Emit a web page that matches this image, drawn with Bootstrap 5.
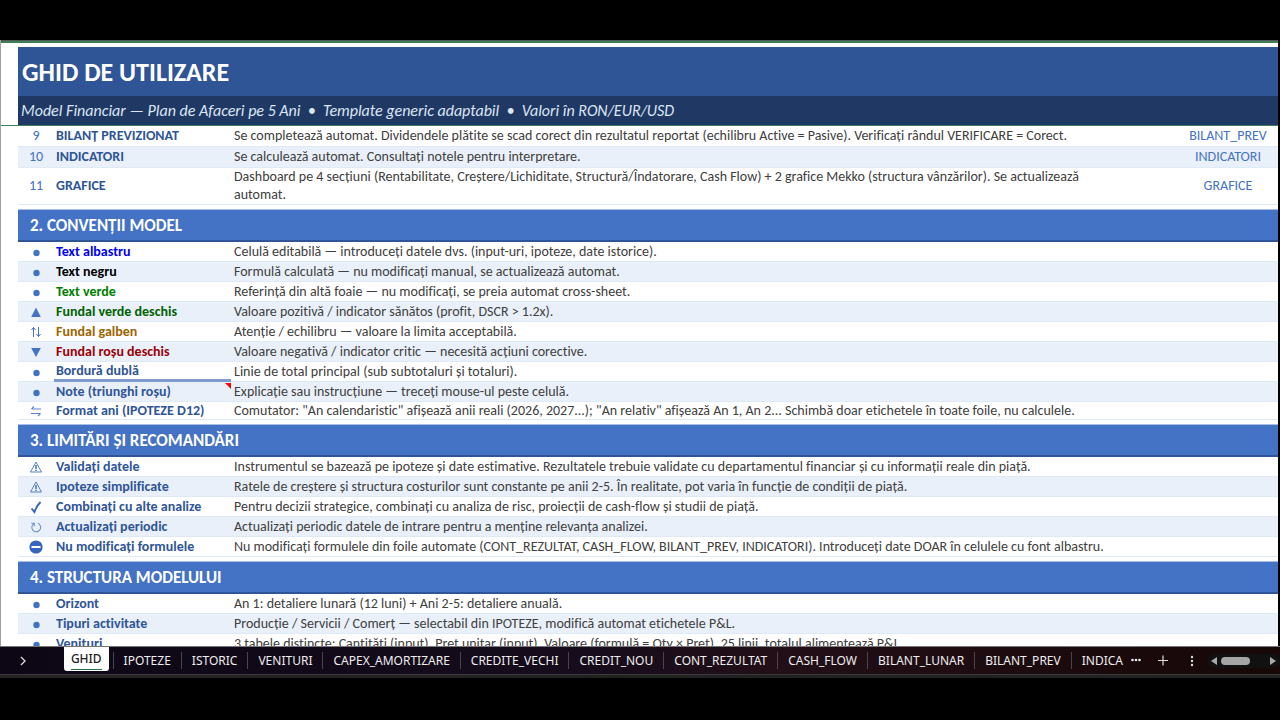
<!DOCTYPE html>
<html lang="ro">
<head>
<meta charset="utf-8">
<meta name="viewport" content="width=device-width, initial-scale=1">
<title>Ghid de utilizare</title>
<link href="https://cdn.jsdelivr.net/npm/bootstrap@5.3.0/dist/css/bootstrap.min.css" rel="stylesheet">
<style>
  body { background: #000; font-family: Carlito, Lato, "Open Sans", sans-serif; font-size: 14px; color: #404040; font-variant-ligatures: none; }
  .screen { height: 100vh; padding: 40px 0 42px; }
  .sheet { background: #fff; border-left: 1px solid #a0a0a0; margin-right: 2px; min-height: 0; }
  .col-edge { height: 3px; background: #555; border-bottom: 2px solid #3c8058; }
  .frozen { padding: 4px 0 0 17px; border-bottom: 1px solid #3f7d5c; }
  .doc-title { background: #2f5597; color: #fff; height: 49px; padding: 2px 0 0 4px; font-size: 26px; font-weight: 700; }
  .doc-sub { background: #203864; color: #dce6f5; height: 29px; padding-left: 3px; font-size: 16px; font-style: italic; }
  .grid-wrap { padding-left: 17px; }
  .guide { width: 100%; table-layout: fixed; border-collapse: separate; border-spacing: 0; line-height: 19px; }
  .guide td, .guide th { padding: 0; vertical-align: middle; }
  .guide tr.item > * { border-bottom: 1px solid #deeaf6; }
  .guide tr.alt > * { background: #eaf0f9; }
  .guide tr.head1 > * { line-height: 20px; }
  .guide tr.two-line > * { line-height: 18px; }
  .guide tr.short > * { line-height: 17px; }
  .guide tr.item > td:first-child { color: #4472c4; text-align: center; }
  .guide tr.item > th { padding-left: 2px; color: #2f5597; font-weight: 700; white-space: nowrap; position: relative; }
  .guide tr.item > td:nth-child(3) { padding: 0 60px 0 3px; }
  .guide tr.item > td:nth-child(4) { text-align: center; }
  .guide a { color: #4472c4; text-decoration: none; }
  .guide tr.section > th { background: #4472c4; color: #fff; font-size: 17px; font-weight: 700; height: 33px; padding-left: 12px; border-top: 1px solid #a9bfe6; border-bottom: 2px solid #2f5597; }
  .guide tr.gap-row > td { height: 4px; line-height: 0; }
  .guide svg { display: block; margin: 0 auto; }
  .guide tr.item > th.double-line { border-bottom: 3px solid #7f9bcb; line-height: 17px; }
  .note-mark { position: absolute; top: 1px; right: 0; border: 3px solid; border-color: #f00 #f00 transparent transparent; }
  .tabs { height: 28px; background: linear-gradient(90deg, #0c0615, #160c1c 45%, #220f18 60%, #170706); border-top: 1px solid #777; color: #eee; font-family: "Noto Sans", "Open Sans", sans-serif; font-size: 12px; }
  .tabs button { background: none; border: 0; color: inherit; padding: 0; line-height: 18px; white-space: nowrap; }
  .tab-list { margin: 0; padding: 0; list-style: none; }
  .tab-list li + li { border-left: 1px solid #4b4450; height: 17px; display: flex; align-items: center; }
  .tab-list li + li button { padding: 0 10px; }
  .tab-list li:last-child button { padding-right: 0; }
  .tabs button.current { background: #fff; color: #222; border-radius: 0 0 3px 3px; height: 24px; padding: 0 7px; margin-right: 4px; font-weight: 500; }
  .current span { display: block; border-bottom: 1px solid #217346; height: 21px; padding-top: 1px; }
  .scroller { width: 73px; height: 14px; border-radius: 7px; background: #111; padding: 0 4px; }
  .thumb { width: 29px; height: 8px; border-radius: 4px; background: #a5a5a5; }
  .win-edge { height: 4px; background: #222; border-top: 1px solid #3a3a3a; }
</style>
</head>
<body>
<svg width="0" height="0" class="position-absolute" aria-hidden="true">
  <symbol id="dot" viewBox="0 0 14 14"><circle cx="7.500" cy="8" r="3.200" fill="#4472c4"/></symbol>
  <symbol id="up" viewBox="0 0 14 14"><path d="M7 2.500 11.800 12H2.200z" fill="#4472c4"/></symbol>
  <symbol id="down" viewBox="0 0 14 14"><path d="M7 12 11.800 3H2.200z" fill="#4472c4"/></symbol>
  <symbol id="updown" viewBox="0 0 14 14"><path d="M4.500 12V2.500M2.500 5l2-2.500 2 2.500M9.500 2v9.500M7.500 9l2 2.500 2-2.500" fill="none" stroke="#4472c4"/></symbol>
  <symbol id="swap" viewBox="0 0 14 14"><path d="M12 5H2.500M5 2.500 2.500 5M2 9.500h9.500M11.500 9.500 9 12" fill="none" stroke="#5a82cc" stroke-width="1.100"/></symbol>
  <symbol id="warn" viewBox="0 0 14 14"><path d="M7 2 12.500 12h-11z" fill="none" stroke="#4472c4" stroke-width=".9"/><path d="M7 5v4M7 9.800v1.200" stroke="#4472c4" stroke-width="1.500"/></symbol>
  <symbol id="check" viewBox="0 0 14 14"><path d="M2.500 8.500 5.500 12Q7.500 6 11.500 2" fill="none" stroke="#3565bd" stroke-width="1.900"/></symbol>
  <symbol id="cycle" viewBox="0 0 14 14"><path d="M2.300 3.300h3v3M5 3.600a4.400 4.400 0 1 0 5.800 1.200Q10.300 3.600 9 3.300" fill="none" stroke="#6c90d2" stroke-width="1.100"/></symbol>
  <symbol id="stop" viewBox="0 0 14 14"><circle cx="7" cy="7" r="6.600" fill="#3565bd"/><path d="M2.500 7h9" stroke="#fff" stroke-width="2"/></symbol>
</svg>
<div class="screen d-flex flex-column">
  <main class="sheet flex-grow-1 overflow-hidden">
    <div class="col-edge"></div>
    <header class="frozen">
      <h1 class="doc-title d-flex align-items-center m-0">GHID DE UTILIZARE</h1>
      <p class="doc-sub d-flex align-items-center m-0">Model Financiar — Plan de Afaceri pe 5 Ani&nbsp; •&nbsp; Template generic adaptabil&nbsp; •&nbsp; Valori în RON/EUR/USD</p>
    </header>
    <div class="grid-wrap">
      <table class="guide">
        <colgroup><col style="width:36px"><col style="width:177px"><col><col style="width:100px"></colgroup>
        <tbody>
          <tr class="item head1"><td>9</td><th scope="row">BILANȚ PREVIZIONAT</th><td>Se completează automat. Dividendele plătite se scad corect din rezultatul reportat (echilibru Active = Pasive). Verificați rândul VERIFICARE = Corect.</td><td><a href="#">BILANT_PREV</a></td></tr>
          <tr class="item head1 alt"><td>10</td><th scope="row">INDICATORI</th><td>Se calculează automat. Consultați notele pentru interpretare.</td><td><a href="#">INDICATORI</a></td></tr>
          <tr class="item two-line"><td>11</td><th scope="row">GRAFICE</th><td>Dashboard pe 4 secțiuni (Rentabilitate, Creștere/Lichiditate, Structură/Îndatorare, Cash Flow) + 2 grafice Mekko (structura vânzărilor). Se actualizează automat.</td><td><a href="#">GRAFICE</a></td></tr>
          <tr class="gap-row"><td colspan="4"></td></tr>
        </tbody>
        <tbody>
          <tr class="section"><th colspan="4" scope="rowgroup">2. CONVENȚII MODEL</th></tr>
          <tr class="item"><td><svg width="14" height="14"><use href="#dot"/></svg></td><th scope="row" style="color:#0000ff">Text albastru</th><td>Celulă editabilă — introduceți datele dvs. (input-uri, ipoteze, date istorice).</td><td></td></tr>
          <tr class="item alt"><td><svg width="14" height="14"><use href="#dot"/></svg></td><th scope="row" style="color:#000">Text negru</th><td>Formulă calculată — nu modificați manual, se actualizează automat.</td><td></td></tr>
          <tr class="item"><td><svg width="14" height="14"><use href="#dot"/></svg></td><th scope="row" style="color:#008000">Text verde</th><td>Referință din altă foaie — nu modificați, se preia automat cross-sheet.</td><td></td></tr>
          <tr class="item alt"><td><svg width="14" height="14"><use href="#up"/></svg></td><th scope="row" style="color:#006100">Fundal verde deschis</th><td>Valoare pozitivă / indicator sănătos (profit, DSCR &gt; 1.2x).</td><td></td></tr>
          <tr class="item"><td><svg width="14" height="14"><use href="#updown"/></svg></td><th scope="row" style="color:#9c6500">Fundal galben</th><td>Atenție / echilibru — valoare la limita acceptabilă.</td><td></td></tr>
          <tr class="item alt"><td><svg width="14" height="14"><use href="#down"/></svg></td><th scope="row" style="color:#9c0006">Fundal roșu deschis</th><td>Valoare negativă / indicator critic — necesită acțiuni corective.</td><td></td></tr>
          <tr class="item"><td><svg width="14" height="14"><use href="#dot"/></svg></td><th scope="row" class="double-line">Bordură dublă</th><td>Linie de total principal (sub subtotaluri și totaluri).</td><td></td></tr>
          <tr class="item alt"><td><svg width="14" height="14"><use href="#dot"/></svg></td><th scope="row">Note (triunghi roșu)<span class="note-mark"></span></th><td>Explicație sau instrucțiune — treceți mouse-ul peste celulă.</td><td></td></tr>
          <tr class="item short"><td><svg width="14" height="14"><use href="#swap"/></svg></td><th scope="row">Format ani (IPOTEZE D12)</th><td>Comutator: "An calendaristic" afișează anii reali (2026, 2027...); "An relativ" afișează An 1, An 2... Schimbă doar etichetele în toate foile, nu calculele.</td><td></td></tr>
          <tr class="gap-row"><td colspan="4"></td></tr>
        </tbody>
        <tbody>
          <tr class="section"><th colspan="4" scope="rowgroup">3. LIMITĂRI ȘI RECOMANDĂRI</th></tr>
          <tr class="item"><td><svg width="14" height="14"><use href="#warn"/></svg></td><th scope="row">Validați datele</th><td>Instrumentul se bazează pe ipoteze și date estimative. Rezultatele trebuie validate cu departamentul financiar și cu informații reale din piață.</td><td></td></tr>
          <tr class="item alt"><td><svg width="14" height="14"><use href="#warn"/></svg></td><th scope="row">Ipoteze simplificate</th><td>Ratele de creștere și structura costurilor sunt constante pe anii 2-5. În realitate, pot varia în funcție de condiții de piață.</td><td></td></tr>
          <tr class="item"><td><svg width="14" height="14"><use href="#check"/></svg></td><th scope="row">Combinați cu alte analize</th><td>Pentru decizii strategice, combinați cu analiza de risc, proiecții de cash-flow și studii de piață.</td><td></td></tr>
          <tr class="item alt"><td><svg width="14" height="14"><use href="#cycle"/></svg></td><th scope="row">Actualizați periodic</th><td>Actualizați periodic datele de intrare pentru a menține relevanța analizei.</td><td></td></tr>
          <tr class="item"><td><svg width="14" height="14"><use href="#stop"/></svg></td><th scope="row">Nu modificați formulele</th><td class="text-nowrap">Nu modificați formulele din foile automate (CONT_REZULTAT, CASH_FLOW, BILANT_PREV, INDICATORI). Introduceți date DOAR în celulele cu font albastru.</td><td></td></tr>
          <tr class="gap-row"><td colspan="4"></td></tr>
        </tbody>
        <tbody>
          <tr class="section"><th colspan="4" scope="rowgroup">4. STRUCTURA MODELULUI</th></tr>
          <tr class="item"><td><svg width="14" height="14"><use href="#dot"/></svg></td><th scope="row">Orizont</th><td>An 1: detaliere lunară (12 luni) + Ani 2-5: detaliere anuală.</td><td></td></tr>
          <tr class="item alt"><td><svg width="14" height="14"><use href="#dot"/></svg></td><th scope="row">Tipuri activitate</th><td>Producție / Servicii / Comerț — selectabil din IPOTEZE, modifică automat etichetele P&amp;L.</td><td></td></tr>
          <tr class="item"><td><svg width="14" height="14"><use href="#dot"/></svg></td><th scope="row">Venituri</th><td>3 tabele distincte: Cantități (input), Preț unitar (input), Valoare (formulă = Qty × Preț). 25 linii, totalul alimentează P&amp;L.</td><td></td></tr>
        </tbody>
      </table>
    </div>
  </main>
  <nav class="tabs d-flex flex-shrink-0 align-items-center" aria-label="Foi">
    <button type="button" class="ms-3 me-auto" aria-label="Foaia următoare"><svg class="d-block" width="16" height="16" fill="none" stroke="#ddd" stroke-width="1.300"><path d="m5 4 4 4-4 4"/></svg></button>
    <ul class="tab-list d-flex align-items-center align-self-stretch">
      <li class="align-self-start"><button type="button" class="current"><span>GHID</span></button></li>
      <li><button type="button">IPOTEZE</button></li>
      <li><button type="button">ISTORIC</button></li>
      <li><button type="button">VENITURI</button></li>
      <li><button type="button">CAPEX_AMORTIZARE</button></li>
      <li><button type="button">CREDITE_VECHI</button></li>
      <li><button type="button">CREDIT_NOU</button></li>
      <li><button type="button">CONT_REZULTAT</button></li>
      <li><button type="button">CASH_FLOW</button></li>
      <li><button type="button">BILANT_LUNAR</button></li>
      <li><button type="button">BILANT_PREV</button></li>
      <li><button type="button">INDICA</button></li>
    </ul>
    <button type="button" class="ms-2" aria-label="Mai multe foi"><svg class="d-block" width="10" height="14" fill="#eee"><circle cx="1.500" cy="6" r="1.300"/><circle cx="5" cy="6" r="1.300"/><circle cx="8.500" cy="6" r="1.300"/></svg></button>
    <button type="button" class="ms-3" aria-label="Foaie nouă"><svg class="d-block" width="12" height="14" stroke="#ddd" stroke-width="1.200"><path d="M1 6.500h10M6 1.500v10"/></svg></button>
    <button type="button" class="ms-3" aria-label="Opțiuni"><svg class="d-block" width="14" height="14" fill="#ddd"><circle cx="7" cy="3" r="1.200"/><circle cx="7" cy="7" r="1.200"/><circle cx="7" cy="11" r="1.200"/></svg></button>
    <div class="scroller d-flex align-items-center ms-2">
      <svg width="6" height="8" fill="#aaa"><path d="M6 0v8L0 4z"/></svg>
      <div class="thumb ms-1 me-auto"></div>
      <svg width="6" height="8" fill="#aaa"><path d="M0 0v8l6-4z"/></svg>
    </div>
  </nav>
  <div class="win-edge flex-shrink-0"></div>
</div>
<script src="https://cdn.jsdelivr.net/npm/bootstrap@5.3.0/dist/js/bootstrap.bundle.min.js"></script>
</body>
</html>
